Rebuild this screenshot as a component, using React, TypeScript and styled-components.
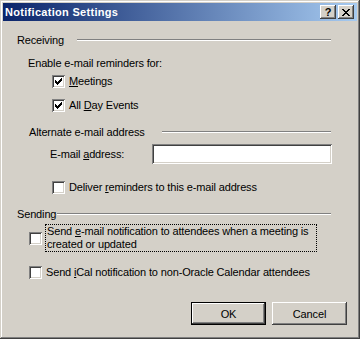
import React from "react";
import styled, { createGlobalStyle } from "styled-components";

const face = "#D4D0C8";
const shadow = "#808080";
const darkShadow = "#404040";

const GlobalStyle = createGlobalStyle`
  html, body {
    margin: 0;
    padding: 0;
    background: ${face};
  }
  body {
    font-family: "Liberation Sans", Arial, sans-serif;
    font-size: 11px;
    letter-spacing: -0.15px;
    color: #000;
  }
`;

const raised = `
  box-shadow: inset -1px -1px ${darkShadow}, inset 1px 1px #ffffff,
    inset -2px -2px ${shadow}, inset 2px 2px ${face};
`;

const sunken = `
  box-shadow: inset 1px 1px ${shadow}, inset -1px -1px #ffffff,
    inset 2px 2px ${darkShadow}, inset -2px -2px ${face};
`;

const Window = styled.div`
  width: 360px;
  height: 339px;
  box-sizing: border-box;
  padding: 3px;
  background: ${face};
  display: flex;
  flex-direction: column;
  box-shadow: inset -1px -1px ${darkShadow}, inset 1px 1px ${face},
    inset -2px -2px ${shadow}, inset 2px 2px #ffffff;
`;

const TitleBar = styled.div`
  height: 18px;
  display: flex;
  align-items: center;
  padding: 0 3px 0 2px;
  background: linear-gradient(to right, #0a246a, #a6caf0);
`;

const Title = styled.div`
  flex: 1;
  color: #ffffff;
  font-weight: bold;
  font-size: 11px;
  letter-spacing: 0.3px;
  white-space: nowrap;
`;

const CaptionButtons = styled.div`
  display: flex;
  gap: 2px;
`;

const CaptionButton = styled.div`
  width: 16px;
  height: 14px;
  background: ${face};
  display: flex;
  align-items: center;
  justify-content: center;
  font-weight: bold;
  font-size: 11px;
  line-height: 14px;
  ${raised}
`;

const Body = styled.div`
  flex: 1;
  display: flex;
  flex-direction: column;
`;

const SectionHeader = styled.div<{ $mt: number; $indent: number }>`
  display: flex;
  align-items: center;
  height: 13px;
  margin-top: ${(p) => p.$mt}px;
  margin-left: ${(p) => p.$indent}px;
  margin-right: 26px;
`;

const HeaderLabel = styled.span<{ $w: number }>`
  width: ${(p) => p.$w}px;
  flex-shrink: 0;
  white-space: nowrap;
`;

const Groove = styled.div`
  flex: 1;
  border-top: 1px solid ${shadow};
  border-bottom: 1px solid #ffffff;
`;

const Row = styled.div<{ $mt: number; $indent: number }>`
  display: flex;
  align-items: center;
  min-height: 13px;
  margin-top: ${(p) => p.$mt}px;
  margin-left: ${(p) => p.$indent}px;
  white-space: nowrap;
`;

const Box = styled.span`
  position: relative;
  width: 13px;
  height: 13px;
  flex-shrink: 0;
  background: #ffffff;
  ${sunken}
  svg {
    position: absolute;
    left: 3px;
    top: 3px;
  }
`;

const CheckText = styled.span<{ $gap: number }>`
  margin-left: ${(p) => p.$gap}px;
  line-height: 13px;
`;

const FocusText = styled.span`
  width: 272px;
  box-sizing: border-box;
  margin-left: 3px;
  padding-left: 1px;
  line-height: 13px;
  border: 1px dotted #000;
`;

const FieldLabel = styled.span`
  width: 102px;
  flex-shrink: 0;
`;

const TextField = styled.div`
  width: 180px;
  height: 20px;
  background: #ffffff;
  ${sunken}
`;

const ButtonRow = styled.div`
  display: flex;
  justify-content: flex-end;
  gap: 6px;
  margin-top: 23px;
  margin-right: 10px;
`;

const PushButton = styled.div<{ $default?: boolean }>`
  width: 75px;
  height: 23px;
  box-sizing: border-box;
  display: flex;
  align-items: center;
  justify-content: center;
  background: ${face};
  border: ${(p) => (p.$default ? "1px solid #000" : "none")};
  ${raised}
`;

const CheckMark = () => (
  <svg width="7" height="7" viewBox="0 0 7 7" shapeRendering="crispEdges">
    <path
      fill="#000"
      d="M6 0h1v1H6z M5 1h2v1H5z M0 2h1v1H0z M4 2h3v1H4z M0 3h2v1H0z M3 3h3v1H3z M0 4h5v1H0z M1 5h3v1H1z M2 6h1v1H2z"
    />
  </svg>
);

const CloseGlyph = () => (
  <svg width="8" height="7" viewBox="0 0 8 7" shapeRendering="crispEdges">
    <path
      fill="#000"
      d="M0 0h2v1H0z M6 0h2v1H6z M1 1h2v1H1z M5 1h2v1H5z M2 2h4v1H2z M3 3h2v1H3z M2 4h4v1H2z M1 5h2v1H1z M5 5h2v1H5z M0 6h2v1H0z M6 6h2v1H6z"
    />
  </svg>
);

const Checkbox = ({ checked }: { checked?: boolean }) => (
  <Box>{checked && <CheckMark />}</Box>
);

export default function App() {
  return (
    <>
      <GlobalStyle />
      <Window>
        <TitleBar>
          <Title>Notification Settings</Title>
          <CaptionButtons>
            <CaptionButton>?</CaptionButton>
            <CaptionButton>
              <CloseGlyph />
            </CaptionButton>
          </CaptionButtons>
        </TitleBar>
        <Body>
          <SectionHeader $mt={12} $indent={14}>
            <HeaderLabel $w={60}>Receiving</HeaderLabel>
            <Groove />
          </SectionHeader>
          <Row $mt={10} $indent={25}>
            Enable e-mail reminders for:
          </Row>
          <Row $mt={6} $indent={49}>
            <Checkbox checked />
            <CheckText $gap={4}>
              <u>M</u>eetings
            </CheckText>
          </Row>
          <Row $mt={11} $indent={49}>
            <Checkbox checked />
            <CheckText $gap={4}>
              All <u>D</u>ay Events
            </CheckText>
          </Row>
          <SectionHeader $mt={13} $indent={26}>
            <HeaderLabel $w={133}>Alternate e-mail address</HeaderLabel>
            <Groove />
          </SectionHeader>
          <Row $mt={6} $indent={47}>
            <FieldLabel>
              E-mail <u>a</u>ddress:
            </FieldLabel>
            <TextField />
          </Row>
          <Row $mt={17} $indent={49}>
            <Checkbox />
            <CheckText $gap={4}>
              Deliver <u>r</u>eminders to this e-mail address
            </CheckText>
          </Row>
          <SectionHeader $mt={13} $indent={14}>
            <HeaderLabel $w={40}>Sending</HeaderLabel>
            <Groove />
          </SectionHeader>
          <Row $mt={4} $indent={26}>
            <Checkbox />
            <FocusText>
              Send <u>e</u>-mail notification to attendees when a meeting is
              <br />
              created or updated
            </FocusText>
          </Row>
          <Row $mt={14} $indent={26}>
            <Checkbox />
            <CheckText $gap={4}>
              Send <u>i</u>Cal notification to non-Oracle Calendar attendees
            </CheckText>
          </Row>
          <ButtonRow>
            <PushButton $default>OK</PushButton>
            <PushButton>Cancel</PushButton>
          </ButtonRow>
        </Body>
      </Window>
    </>
  );
}
